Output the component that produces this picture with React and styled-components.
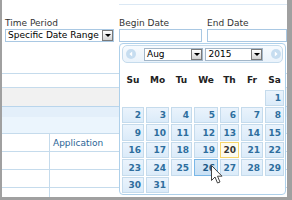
import React from 'react';
import styled, { createGlobalStyle } from 'styled-components';

const GlobalStyle = createGlobalStyle`
    html, body {
        margin: 0;
        padding: 0;
        background: #a0a0a0;
    }
    body {
        font-family: "DejaVu Sans", Verdana, sans-serif;
        font-size: 9px;
    }
`;

const Frame = styled.div`
    width: 292px;
    height: 200px;
    box-sizing: border-box;
    padding: 0 5px 3px 2px;
    background: #a0a0a0;
`;

const Screen = styled.div`
    position: relative;
    height: 100%;
    background: #fff;
    overflow: hidden;
`;

const TopRule = styled.div`
    height: 1px;
    margin: 4px 0 0 117px;
    background: #dbe8f4;
`;

const FilterRow = styled.div`
    display: flex;
    gap: 5px;
    padding: 13px 0 0 3px;
`;

const Field = styled.div`
    width: ${p => p.$w}px;
    display: flex;
    flex-direction: column;
`;

const Label = styled.div`
    height: 11px;
    line-height: 11px;
    color: #333;
    white-space: nowrap;
`;

const SelectBox = styled.div`
    width: ${p => (p.$w ? `${p.$w}px` : 'auto')};
    margin-left: ${p => p.$ml || 0}px;
    height: 13px;
    box-sizing: border-box;
    border: 1px solid ${p => p.$border || '#a9c8e3'};
    background: #fff;
    display: flex;
    align-items: center;
    padding-left: 2px;
    line-height: 11px;
    color: #000;
    white-space: nowrap;
`;

const DropBtn = styled.span`
    margin-left: auto;
    width: 11px;
    height: 11px;
    box-sizing: border-box;
    border: 1px solid #7a7a7a;
    background: linear-gradient(#ffffff, #d2d2d2);
    display: flex;
    align-items: center;
    justify-content: center;

    &::after {
        content: '';
        border-left: 3px solid transparent;
        border-right: 3px solid transparent;
        border-top: 3px solid #000;
    }
`;

const TextInput = styled.div`
    height: 13px;
    box-sizing: border-box;
    border: 1px solid #a9c8e3;
    background: #fff;
`;

const Rule = styled.div`
    height: 1px;
    margin-top: ${p => p.$mt || 0}px;
    background: ${p => p.$c || '#c5dbec'};
`;

const Band = styled.div`
    height: ${p => p.$h}px;
    background: ${p => p.$bg};
`;

const Row = styled.div`
    display: grid;
    grid-template-columns: 47px 1fr;
    height: 17px;
    border-bottom: 1px solid #c5dbec;
`;

const Cell = styled.div`
    display: flex;
    align-items: center;
    padding-left: 3px;
    color: #2a6496;
    & + & {
        border-left: 1px solid #c5dbec;
    }
`;

const Popup = styled.div`
    position: absolute;
    left: 117px;
    top: 43px;
    width: 167px;
    height: 152px;
    box-sizing: border-box;
    border: 1px solid #aed0ea;
    border-radius: 4px;
    background: #fff;
    padding: 1px 0 0 2px;
`;

const CalHeader = styled.div`
    width: 161px;
    height: 18px;
    box-sizing: border-box;
    border: 1px solid #c5dbec;
    border-radius: 5px;
    background: linear-gradient(#f7fbfe, #eaf3fb);
    display: flex;
    align-items: center;
    padding: 0 1px 0 3px;
`;

const NavIcon = styled.svg`
    width: 10px;
    height: 10px;
    flex: none;
    margin-left: ${p => p.$ml || 0}px;
`;

const DayGrid = styled.div`
    display: grid;
    grid-template-columns: 22px 23px 21px 24px 19px 22px 19px;
    grid-template-rows: 18px 16px 16px 17px 16px 17px 16px;
    column-gap: 2px;
    row-gap: 1px;
    margin-top: 8px;
`;

const DayName = styled.div`
    display: flex;
    align-items: center;
    justify-content: center;
    font-weight: bold;
    color: #222;
`;

const looks = {
    normal: {
        border: '#c5dbec',
        bg: 'linear-gradient(#eaf3fc, #dbebf9)',
        color: '#2e6e9e',
    },
    today: {
        border: '#f6d66a',
        bg: '#fdfbee',
        color: '#363636',
    },
    hover: {
        border: '#79b7e7',
        bg: 'linear-gradient(#d8e9f7, #c9e0f4)',
        color: '#1d5987',
    },
};

const DayCell = styled.div`
    box-sizing: border-box;
    grid-column-start: ${p => p.$start || 'auto'};
    border: 1px solid ${p => looks[p.$look].border};
    background: ${p => looks[p.$look].bg};
    color: ${p => looks[p.$look].color};
    font-weight: bold;
    display: flex;
    align-items: center;
    justify-content: flex-end;
    padding-right: 2px;
`;

const Pointer = styled.svg`
    position: absolute;
    left: 209px;
    top: 165px;
    width: 12px;
    height: 19px;
`;

const dayNames = ['Su', 'Mo', 'Tu', 'We', 'Th', 'Fr', 'Sa'];
const days = Array.from({ length: 31 }, (_, i) => i + 1);

function lookFor(d) {
    if (d === 20) return 'today';
    if (d === 26) return 'hover';
    return 'normal';
}

function Calendar() {
    return (
        <Popup>
            <CalHeader>
                <NavIcon viewBox="0 0 10 10">
                    <circle cx="5" cy="5" r="5" fill="#c6ddf0" />
                    <path d="M6.2 2.6 L3.4 5 L6.2 7.4 Z" fill="#fff" />
                </NavIcon>
                <SelectBox $w={60} $ml={8} $border="#a3b6c8">
                    Aug<DropBtn />
                </SelectBox>
                <SelectBox $w={58} $ml={2} $border="#a3b6c8">
                    2015<DropBtn />
                </SelectBox>
                <NavIcon viewBox="0 0 10 10" $ml={8}>
                    <circle cx="5" cy="5" r="5" fill="#c6ddf0" />
                    <path d="M3.8 2.6 L6.6 5 L3.8 7.4 Z" fill="#fff" />
                </NavIcon>
            </CalHeader>
            <DayGrid>
                {dayNames.map(n => <DayName key={n}>{n}</DayName>)}
                {days.map(d => (
                    <DayCell key={d} $look={lookFor(d)} $start={d === 1 ? 7 : undefined}>
                        {d}
                    </DayCell>
                ))}
            </DayGrid>
        </Popup>
    );
}

export default function App() {
    return (
        <Frame>
            <GlobalStyle />
            <Screen>
                <TopRule />
                <FilterRow>
                    <Field $w={109}>
                        <Label>Time Period</Label>
                        <SelectBox>
                            Specific Date Range<DropBtn />
                        </SelectBox>
                    </Field>
                    <Field $w={83}>
                        <Label>Begin Date</Label>
                        <TextInput />
                    </Field>
                    <Field $w={80}>
                        <Label>End Date</Label>
                        <TextInput />
                    </Field>
                </FilterRow>

                <Rule $mt={31} />
                <Band $h={13} $bg="#fff" />
                <Rule />
                <Band $h={18} $bg="#f1f1f1" />
                <Rule $c="#b9d5ec" />
                <Band $h={26} $bg="linear-gradient(#e3effa 0, #e3effa 10px, #ebf5fd 10px)" />
                <Rule />
                <Row>
                    <Cell />
                    <Cell>Application</Cell>
                </Row>
                <Row>
                    <Cell />
                    <Cell />
                </Row>
                <Row>
                    <Cell />
                    <Cell />
                </Row>
                <Row>
                    <Cell />
                    <Cell />
                </Row>

                <Calendar />

                <Pointer viewBox="0 0 12 19">
                    <path
                        d="M0.5 0.5 L0.5 15.5 L4 12 L6.5 18 L9 17 L6.5 11.2 L11 11.2 Z"
                        fill="#fff"
                        stroke="#444"
                        strokeWidth="1"
                        strokeLinejoin="round"
                    />
                </Pointer>
            </Screen>
        </Frame>
    );
}
